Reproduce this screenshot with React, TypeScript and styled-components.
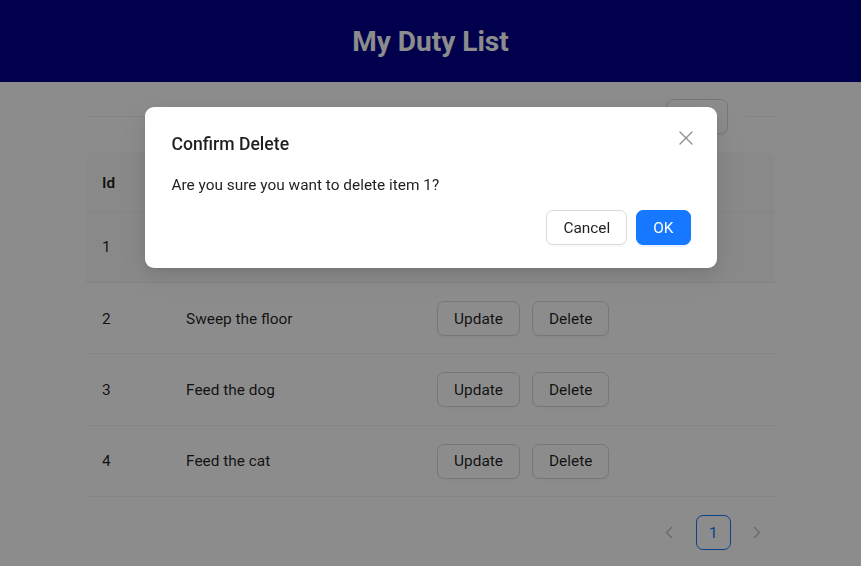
import styled, { createGlobalStyle } from "styled-components"

const GlobalStyle = createGlobalStyle`
    html, body {
        margin: 0;
        padding: 0;
        background: #ffffff;
        font-family: Roboto, "Liberation Sans", sans-serif;
        color: rgba(0, 0, 0, 0.88);
    }
`

interface Duty {
    id: number
    name: string
}

const duties: Duty[] = [
    { id: 1, name: "Do the dishes" },
    { id: 2, name: "Sweep the floor" },
    { id: 3, name: "Feed the dog" },
    { id: 4, name: "Feed the cat" },
]

const CloseIcon = () => (
    <svg width="14" height="14" viewBox="0 0 14 14" fill="none">
        <path d="M1 1 L13 13 M13 1 L1 13" stroke="currentColor" strokeWidth="1.3" strokeLinecap="round" />
    </svg>
)

const Chevron = ({ dir }: { dir: "left" | "right" }) => (
    <svg width="8" height="13" viewBox="0 0 8 13" fill="none">
        <path
            d={dir === "left" ? "M7 1 L1.5 6.5 L7 12" : "M1 1 L6.5 6.5 L1 12"}
            stroke="currentColor"
            strokeWidth="1.3"
        />
    </svg>
)

export default function App() {
    return (
        <>
            <GlobalStyle />
            <Header>
                <h1>My Duty List</h1>
            </Header>
            <Main>
                <Toolbar>
                    <Line />
                    <Button>Add</Button>
                    <Line $short />
                </Toolbar>
                <Table>
                    <thead>
                        <tr>
                            <Th $width={84}>Id</Th>
                            <Th $width={250}>Name</Th>
                            <Th>Actions</Th>
                        </tr>
                    </thead>
                    <tbody>
                        {duties.map((duty) => (
                            <Row key={duty.id} $hover={duty.id === 1}>
                                <Td>{duty.id}</Td>
                                <Td>{duty.name}</Td>
                                <Td>
                                    <Actions>
                                        <Button>Update</Button>
                                        <Button>Delete</Button>
                                    </Actions>
                                </Td>
                            </Row>
                        ))}
                    </tbody>
                </Table>
                <Pagination>
                    <PageItem $muted>
                        <Chevron dir="left" />
                    </PageItem>
                    <PageItem $active>1</PageItem>
                    <PageItem $muted>
                        <Chevron dir="right" />
                    </PageItem>
                </Pagination>
            </Main>

            <Mask />
            <ModalWrap>
                <Modal>
                    <CloseButton aria-label="Close">
                        <CloseIcon />
                    </CloseButton>
                    <ModalTitle>Confirm Delete</ModalTitle>
                    <ModalBody>Are you sure you want to delete item 1?</ModalBody>
                    <ModalFooter>
                        <Button>Cancel</Button>
                        <Button $primary>OK</Button>
                    </ModalFooter>
                </Modal>
            </ModalWrap>
        </>
    )
}

const Header = styled.header`
    height: 82px;
    background: #00008b;
    display: flex;
    align-items: center;
    justify-content: center;

    h1 {
        margin: 0;
        color: #ffffff;
        font-size: 28px;
        font-weight: 700;
    }
`

const Main = styled.main`
    width: 80%;
    margin: 0 auto;
`

const Toolbar = styled.div`
    display: flex;
    align-items: center;
    margin: 17px 0 18px;

    button {
        margin: 0 18px 0 7px;
    }
`

const Line = styled.div<{ $short?: boolean }>`
    height: 1px;
    background: rgba(5, 5, 5, 0.06);
    flex: ${(p) => (p.$short ? "0 0 29px" : "1")};
`

const Button = styled.button<{ $primary?: boolean }>`
    height: 35px;
    padding: 0 16px;
    border-radius: 7px;
    font-family: inherit;
    font-size: 15.4px;
    cursor: pointer;
    border: 1px solid ${(p) => (p.$primary ? "#1677ff" : "#d9d9d9")};
    background: ${(p) => (p.$primary ? "#1677ff" : "#ffffff")};
    color: ${(p) => (p.$primary ? "#ffffff" : "rgba(0, 0, 0, 0.88)")};
    box-shadow: ${(p) =>
        p.$primary ? "0 2px 0 rgba(5, 145, 255, 0.1)" : "0 2px 0 rgba(0, 0, 0, 0.02)"};
`

const Table = styled.table`
    width: 100%;
    border-collapse: collapse;
    font-size: 15.4px;
`

const Th = styled.th<{ $width?: number }>`
    width: ${(p) => (p.$width ? `${p.$width}px` : "auto")};
    height: 59px;
    box-sizing: border-box;
    padding: 3px 16px 0;
    text-align: left;
    font-weight: 600;
    background: #fafafa;
    border-bottom: 1px solid #f0f0f0;
    &:first-child {
        border-top-left-radius: 9px;
    }
    &:last-child {
        border-top-right-radius: 9px;
    }
`

const Row = styled.tr<{ $hover?: boolean }>`
    background: ${(p) => (p.$hover ? "#fafafa" : "#ffffff")};
`

const Td = styled.td`
    height: 71.4px;
    box-sizing: border-box;
    padding: 1px 16px 0;
    border-bottom: 1px solid #f0f0f0;
`

const Actions = styled.div`
    display: flex;
    gap: 12px;
    margin-left: 1px;
`

const Pagination = styled.nav`
    display: flex;
    justify-content: flex-end;
    gap: 9px;
    margin-top: 18px;
`

const PageItem = styled.div<{ $active?: boolean; $muted?: boolean }>`
    width: 35px;
    height: 35px;
    box-sizing: border-box;
    display: flex;
    align-items: center;
    justify-content: center;
    border-radius: 7px;
    font-size: 15.4px;
    border: 1px solid ${(p) => (p.$active ? "#1677ff" : "transparent")};
    color: ${(p) => (p.$active ? "#1677ff" : p.$muted ? "rgba(0, 0, 0, 0.25)" : "inherit")};
`

const Mask = styled.div`
    position: fixed;
    inset: 0;
    background: rgba(0, 0, 0, 0.45);
`

const ModalWrap = styled.div`
    position: fixed;
    inset: 0;
    display: flex;
    justify-content: center;
    align-items: flex-start;
    padding-top: 107px;
`

const Modal = styled.div`
    position: relative;
    width: 572px;
    box-sizing: border-box;
    padding: 24px 26px 23px 27px;
    background: #ffffff;
    border-radius: 9px;
    box-shadow: 0 6px 16px 0 rgba(0, 0, 0, 0.08), 0 3px 6px -4px rgba(0, 0, 0, 0.12),
        0 9px 28px 8px rgba(0, 0, 0, 0.05);
`

const CloseButton = styled.button`
    position: absolute;
    top: 19px;
    right: 19px;
    width: 24px;
    height: 24px;
    padding: 0;
    border: none;
    background: transparent;
    color: rgba(0, 0, 0, 0.45);
    display: flex;
    align-items: center;
    justify-content: center;
`

const ModalTitle = styled.div`
    font-size: 17.6px;
    font-weight: 500;
    line-height: 26px;
`

const ModalBody = styled.div`
    margin-top: 16px;
    font-size: 15.4px;
    line-height: 24px;
`

const ModalFooter = styled.div`
    margin-top: 13px;
    display: flex;
    justify-content: flex-end;
    gap: 9px;
`
